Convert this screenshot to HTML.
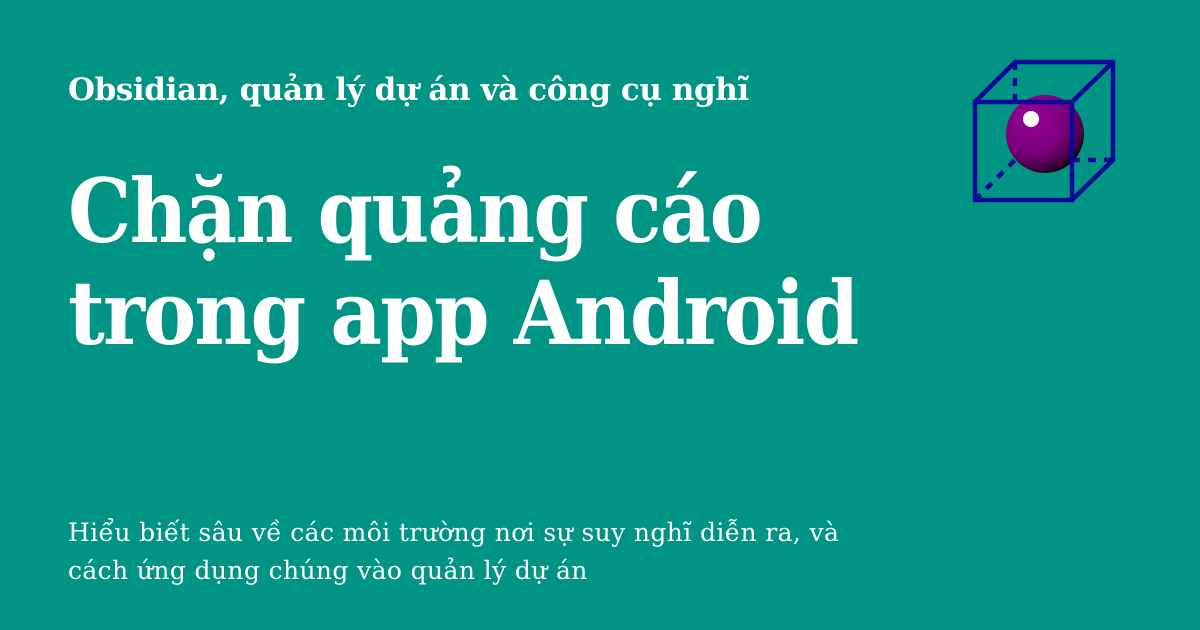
<!DOCTYPE html>
<html><head><meta charset="utf-8"><style>
html,body{margin:0;padding:0}
body{width:1200px;height:630px;background:#009485;position:relative;overflow:hidden;font-family:"DejaVu Serif","Liberation Serif",serif;color:#fff}
.t{position:absolute;left:68px;white-space:nowrap}
.sub{top:72px;font-size:31px;font-weight:bold;letter-spacing:-0.4px}
.h{font-size:88px;font-weight:bold;letter-spacing:-2px;line-height:102px;transform:scaleX(0.905);transform-origin:0 0}
.d{font-size:25px;line-height:38px;top:514px;letter-spacing:0.38px}
</style></head><body>
<div class="t sub">Obsidian, quản lý dự án và công cụ nghĩ</div>
<div class="t h" style="top:160px">Chặn quảng cáo<br>trong app Android</div>
<div class="t d">Hiểu biết sâu về các môi trường nơi sự suy nghĩ diễn ra, và<br>cách ứng dụng chúng vào quản lý dự án</div>
<svg style="position:absolute;left:0;top:0" width="1200" height="630">
<defs><radialGradient id="g" cx="0.35" cy="0.3" r="0.8"><stop offset="0" stop-color="#9a009a"/><stop offset="0.55" stop-color="#7a007a"/><stop offset="0.75" stop-color="#550055"/><stop offset="1" stop-color="#000"/></radialGradient></defs>
<g stroke="#0a0a96" stroke-width="4.5" fill="none">
<line x1="1015" y1="62" x2="1015" y2="102" stroke-dasharray="8,8"/>
<line x1="975" y1="200" x2="1015" y2="160" stroke-dasharray="8,8"/>
<line x1="1072" y1="160" x2="1113" y2="160" stroke-dasharray="8,8"/>
</g>
<circle cx="1045" cy="134" r="39" fill="url(#g)"/>
<circle cx="1031" cy="119" r="8" fill="#fff"/>
<g stroke="#0a0a96" stroke-width="4.5" fill="none">
<rect x="975" y="102" width="97" height="98"/>
<polyline points="975,102 1015,62 1113,62 1113,160 1072,200"/>
<line x1="1072" y1="102" x2="1113" y2="62"/>
</g>
</svg>
</body></html>
